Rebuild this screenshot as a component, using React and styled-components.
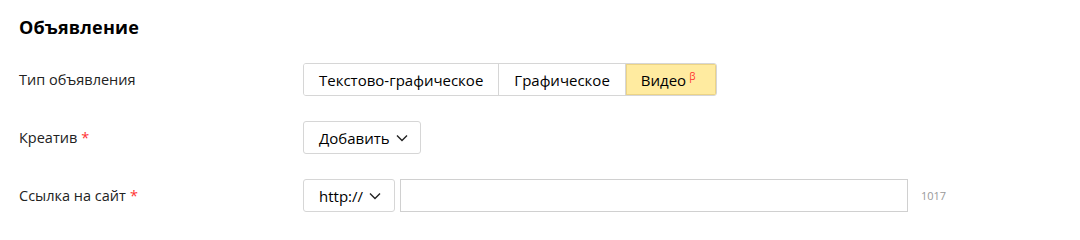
import styled, { createGlobalStyle } from "styled-components";

const Global = createGlobalStyle`
  body {
    margin: 0;
    background: #fff;
    font-family: "Open Sans", "Liberation Sans", sans-serif;
    color: #000;
  }
`;

const Section = styled.section`
  padding: 14px 19px 0;
`;

const Title = styled.h2`
  margin: 0 0 23px;
  font-size: 18px;
  font-weight: 700;
  line-height: 26px;
  letter-spacing: 0.2px;
  color: #000;
`;

const Row = styled.div`
  display: grid;
  grid-template-columns: 284px 1fr;
  align-items: center;
  height: 33px;
  margin-bottom: 25px;
`;

const Label = styled.div`
  font-size: 14.5px;
  color: #222;
`;

const Star = styled.span`
  color: #f33;
  margin-left: 4px;
`;

const Segments = styled.div`
  display: inline-flex;
  height: 33px;
  border: 1px solid #d6d6d6;
  border-radius: 3px;
  overflow: hidden;
  box-sizing: border-box;
`;

const Segment = styled.button`
  font: inherit;
  font-size: 15px;
  color: #000;
  padding: ${p => (p.active ? "0 21px 0 15px" : "0 15px")};
  border: 0;
  border-left: ${p => (p.first ? "0" : "1px solid #d6d6d6")};
  background: ${p => (p.active ? "#ffeba0" : "#fff")};
  box-shadow: ${p => (p.active ? "inset 0 0 0 1px #ecd486" : "none")};
`;

const Beta = styled.sup`
  color: #f33;
  font-size: 10px;
  margin-left: 3px;
  vertical-align: 6px;
  line-height: 0;
`;

const Button = styled.button`
  display: inline-flex;
  align-items: center;
  gap: 6px;
  height: 33px;
  min-width: ${p => p.minWidth || "0"};
  box-sizing: border-box;
  font: inherit;
  font-size: 15px;
  color: #000;
  background: #fff;
  border: 1px solid #d6d6d6;
  border-radius: 3px;
  padding: 0 12px 0 15px;
`;

const Controls = styled.div`
  display: flex;
  align-items: center;
  gap: 5px;
`;

const Input = styled.input`
  width: 508px;
  height: 33px;
  box-sizing: border-box;
  border: 1px solid #d0d0d0;
  border-radius: 0;
  padding: 0 8px;
  font: inherit;
  font-size: 15px;
  outline: none;
`;

const Counter = styled.span`
  font-size: 11px;
  color: #999;
  margin-left: 8px;
`;

const Chevron = () => (
  <svg width="12" height="8" viewBox="0 0 12 8">
    <path d="M1 1.5l5 5 5-5" fill="none" stroke="#222" strokeWidth="1.4" />
  </svg>
);

export default function App() {
  return (
    <>
      <Global />
      <Section>
        <Title>Объявление</Title>
        <Row>
          <Label>Тип объявления</Label>
          <div>
            <Segments>
              <Segment first>Текстово-графическое</Segment>
              <Segment>Графическое</Segment>
              <Segment active>
                Видео<Beta>β</Beta>
              </Segment>
            </Segments>
          </div>
        </Row>
        <Row>
          <Label>
            Креатив<Star>*</Star>
          </Label>
          <div>
            <Button>
              Добавить<Chevron />
            </Button>
          </div>
        </Row>
        <Row>
          <Label>
            Ссылка на сайт<Star>*</Star>
          </Label>
          <Controls>
            <Button minWidth="92px">
              http://<Chevron />
            </Button>
            <Input />
            <Counter>1017</Counter>
          </Controls>
        </Row>
      </Section>
    </>
  );
}
